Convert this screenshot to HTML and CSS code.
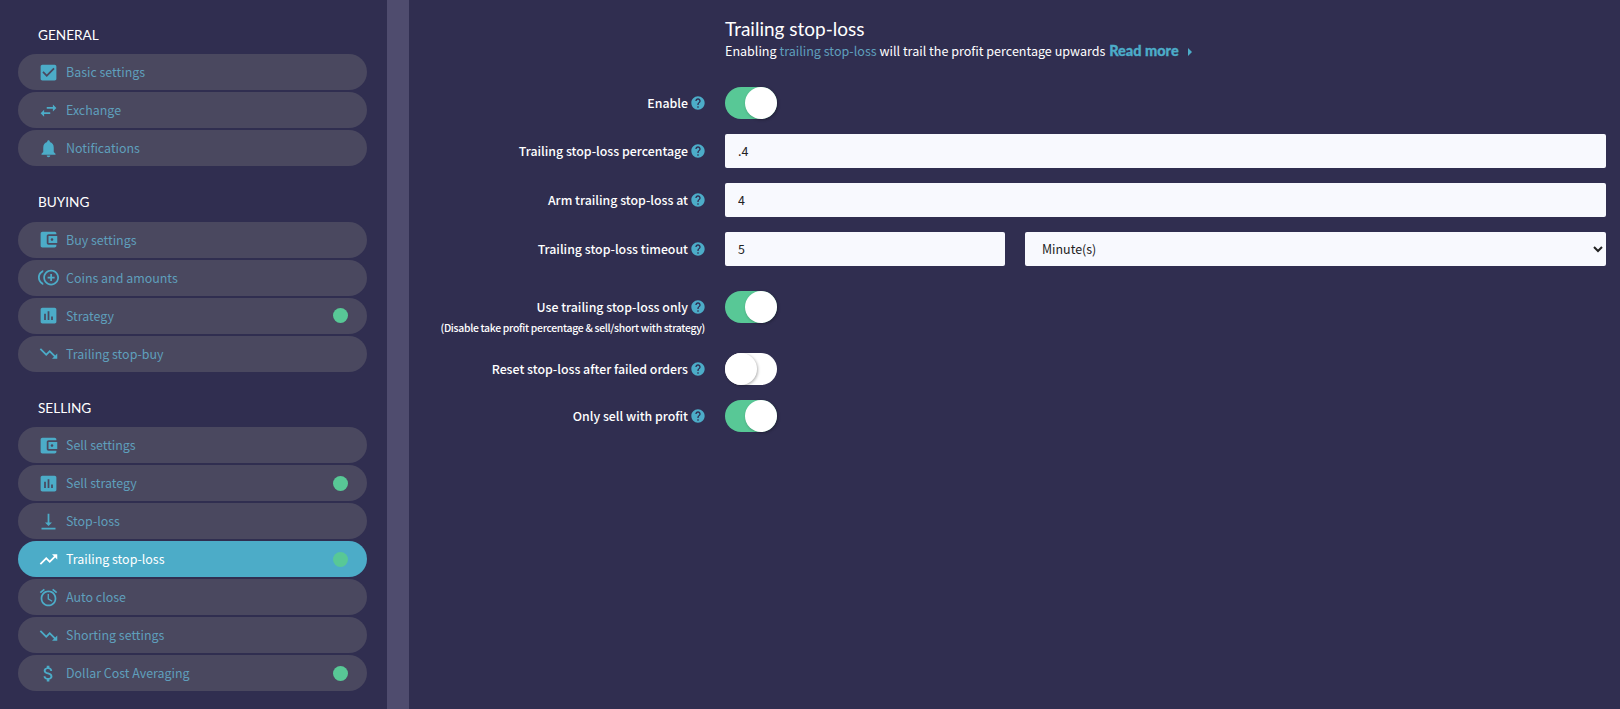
FILE: index.html
```html
<!DOCTYPE html>
<html lang="en">
  <head>
    <meta charset="UTF-8" />
    <meta name="viewport" content="width=device-width, initial-scale=1.0" />
    <title>Trailing stop-loss</title>
    <link rel="stylesheet" href="styles.css">
  </head>
  <body>
    <aside class="sidebar">
      <section class="menu-group">
        <h4 class="menu-title">GENERAL</h4>
        <a class="menu-item" href="#">
          <svg class="menu-icon" viewBox="0 0 24 24"><path d="M19 3H5c-1.11 0-2 .9-2 2v14c0 1.1.89 2 2 2h14c1.11 0 2-.9 2-2V5c0-1.1-.89-2-2-2zm-9 14l-5-5 1.41-1.41L10 14.17l7.59-7.59L19 8l-9 9z"/></svg>
          <span>Basic settings</span>
        </a>
        <a class="menu-item" href="#">
          <svg class="menu-icon" viewBox="0 0 24 24"><path d="M6.99 11L3 15l3.99 4v-3H14v-2H6.99v-3zM21 9l-3.99-4v3H10v2h7.01v3L21 9z"/></svg>
          <span>Exchange</span>
        </a>
        <a class="menu-item" href="#">
          <svg class="menu-icon" viewBox="0 0 24 24"><path d="M12 22c1.1 0 2-.9 2-2h-4c0 1.1.89 2 2 2zm6-6v-5c0-3.07-1.64-5.64-4.5-6.32V4c0-.83-.67-1.5-1.5-1.5s-1.5.67-1.5 1.5v.68C7.63 5.36 6 7.92 6 11v5l-2 2v1h16v-1l-2-2z"/></svg>
          <span>Notifications</span>
        </a>
      </section>
      <section class="menu-group">
        <h4 class="menu-title">BUYING</h4>
        <a class="menu-item" href="#">
          <svg class="menu-icon" viewBox="0 0 24 24"><path d="M21 18v1c0 1.1-.9 2-2 2H5c-1.11 0-2-.9-2-2V5c0-1.1.89-2 2-2h14c1.1 0 2 .9 2 2v1h-9c-1.11 0-2 .9-2 2v8c0 1.1.89 2 2 2h9zm-9-2h10V8H12v8zm4-2.5c-.83 0-1.5-.67-1.5-1.5s.67-1.5 1.5-1.5 1.5.67 1.5 1.5-.67 1.5-1.5 1.5z"/></svg>
          <span>Buy settings</span>
        </a>
        <a class="menu-item" href="#">
          <svg class="menu-icon" viewBox="0 0 24 24"><path d="M16 8h-2v3h-3v2h3v3h2v-3h3v-2h-3zM2 12c0-2.79 1.64-5.2 4.01-6.32V3.52C2.52 4.76 0 8.09 0 12s2.52 7.24 6.01 8.48v-2.16C3.64 17.2 2 14.79 2 12zm13-9c-4.96 0-9 4.04-9 9s4.04 9 9 9 9-4.04 9-9-4.04-9-9-9zm0 16c-3.86 0-7-3.14-7-7s3.14-7 7-7 7 3.14 7 7-3.14 7-7 7z"/></svg>
          <span>Coins and amounts</span>
        </a>
        <a class="menu-item" href="#">
          <svg class="menu-icon" viewBox="0 0 24 24"><path d="M19 3H5c-1.1 0-2 .9-2 2v14c0 1.1.9 2 2 2h14c1.1 0 2-.9 2-2V5c0-1.1-.9-2-2-2zM9 17H7v-7h2v7zm4 0h-2V7h2v10zm4 0h-2v-4h2v4z"/></svg>
          <span>Strategy</span>
          <i class="dot"></i>
        </a>
        <a class="menu-item" href="#">
          <svg class="menu-icon" viewBox="0 0 24 24"><path d="M16 18l2.29-2.29-4.88-4.88-4 4L2 7.41 3.41 6l6 6 4-4 6.3 6.29L22 12v6z"/></svg>
          <span>Trailing stop-buy</span>
        </a>
      </section>
      <section class="menu-group">
        <h4 class="menu-title">SELLING</h4>
        <a class="menu-item" href="#">
          <svg class="menu-icon" viewBox="0 0 24 24"><path d="M21 18v1c0 1.1-.9 2-2 2H5c-1.11 0-2-.9-2-2V5c0-1.1.89-2 2-2h14c1.1 0 2 .9 2 2v1h-9c-1.11 0-2 .9-2 2v8c0 1.1.89 2 2 2h9zm-9-2h10V8H12v8zm4-2.5c-.83 0-1.5-.67-1.5-1.5s.67-1.5 1.5-1.5 1.5.67 1.5 1.5-.67 1.5-1.5 1.5z"/></svg>
          <span>Sell settings</span>
        </a>
        <a class="menu-item" href="#">
          <svg class="menu-icon" viewBox="0 0 24 24"><path d="M19 3H5c-1.1 0-2 .9-2 2v14c0 1.1.9 2 2 2h14c1.1 0 2-.9 2-2V5c0-1.1-.9-2-2-2zM9 17H7v-7h2v7zm4 0h-2V7h2v10zm4 0h-2v-4h2v4z"/></svg>
          <span>Sell strategy</span>
          <i class="dot"></i>
        </a>
        <a class="menu-item" href="#">
          <svg class="menu-icon" viewBox="0 0 24 24"><path d="M16 13h-3V3h-2v10H8l4 4 4-4zM4 19v2h16v-2H4z"/></svg>
          <span>Stop-loss</span>
        </a>
        <a class="menu-item active" href="#">
          <svg class="menu-icon" viewBox="0 0 24 24"><path d="M16 6l2.29 2.29-4.88 4.88-4-4L2 16.59 3.41 18l6-6 4 4 6.3-6.29L22 12V6z"/></svg>
          <span>Trailing stop-loss</span>
          <i class="dot"></i>
        </a>
        <a class="menu-item" href="#">
          <svg class="menu-icon" viewBox="0 0 24 24"><path d="M22 5.72l-4.6-3.86-1.29 1.53 4.6 3.86L22 5.72zM7.88 3.39L6.6 1.86 2 5.71l1.29 1.53 4.59-3.85zM12.5 8H11v6l4.75 2.85.75-1.23-4-2.37V8zM12 4c-4.97 0-9 4.03-9 9s4.03 9 9 9 9-4.03 9-9-4.03-9-9-9zm0 16c-3.87 0-7-3.13-7-7s3.13-7 7-7 7 3.13 7 7-3.13 7-7 7z"/></svg>
          <span>Auto close</span>
        </a>
        <a class="menu-item" href="#">
          <svg class="menu-icon" viewBox="0 0 24 24"><path d="M16 18l2.29-2.29-4.88-4.88-4 4L2 7.41 3.41 6l6 6 4-4 6.3 6.29L22 12v6z"/></svg>
          <span>Shorting settings</span>
        </a>
        <a class="menu-item" href="#">
          <svg class="menu-icon" viewBox="0 0 24 24"><path d="M11.8 10.9c-2.27-.59-3-1.2-3-2.15 0-1.09 1.01-1.85 2.7-1.85 1.78 0 2.44.85 2.5 2.1h2.21c-.07-1.72-1.12-3.3-3.21-3.81V3h-3v2.16c-1.94.42-3.5 1.68-3.5 3.61 0 2.31 1.91 3.46 4.7 4.13 2.5.6 3 1.48 3 2.41 0 .69-.49 1.79-2.7 1.79-2.06 0-2.87-.92-2.98-2.1h-2.2c.12 2.19 1.76 3.42 3.68 3.83V21h3v-2.15c1.95-.37 3.5-1.5 3.5-3.55 0-2.84-2.43-3.81-4.7-4.4z"/></svg>
          <span>Dollar Cost Averaging</span>
          <i class="dot"></i>
        </a>
      </section>
    </aside>
    <div class="scroll-track"></div>

    <main class="content">
      <div class="intro">
        <h3 class="intro-title">Trailing stop-loss</h3>
        <p class="intro-text">
          Enabling <a href="#" class="intro-link">trailing stop-loss</a> will trail the profit percentage upwards
          <a href="#" class="read-more">Read more</a>
          <svg class="read-arrow" viewBox="0 0 4 8"><path d="M0 0l4 4-4 4z"/></svg>
        </p>
      </div>

      <div class="form-row">
        <label class="form-label">Enable
          <svg class="help" viewBox="0 0 24 24"><path d="M12 2C6.48 2 2 6.48 2 12s4.48 10 10 10 10-4.48 10-10S17.52 2 12 2zm1 17h-2v-2h2v2zm2.07-7.75l-.9.92C13.45 12.9 13 13.5 13 15h-2v-.5c0-1.1.45-2.1 1.17-2.83l1.24-1.26c.37-.36.59-.86.59-1.41 0-1.1-.9-2-2-2s-2 .9-2 2H8c0-2.21 1.79-4 4-4s4 1.79 4 4c0 .88-.36 1.68-.93 2.25z"/></svg>
        </label>
        <div class="toggle on"></div>
      </div>

      <div class="form-row">
        <label class="form-label">Trailing stop-loss percentage
          <svg class="help" viewBox="0 0 24 24"><path d="M12 2C6.48 2 2 6.48 2 12s4.48 10 10 10 10-4.48 10-10S17.52 2 12 2zm1 17h-2v-2h2v2zm2.07-7.75l-.9.92C13.45 12.9 13 13.5 13 15h-2v-.5c0-1.1.45-2.1 1.17-2.83l1.24-1.26c.37-.36.59-.86.59-1.41 0-1.1-.9-2-2-2s-2 .9-2 2H8c0-2.21 1.79-4 4-4s4 1.79 4 4c0 .88-.36 1.68-.93 2.25z"/></svg>
        </label>
        <input class="field" type="text" value=".4" />
      </div>

      <div class="form-row">
        <label class="form-label">Arm trailing stop-loss at
          <svg class="help" viewBox="0 0 24 24"><path d="M12 2C6.48 2 2 6.48 2 12s4.48 10 10 10 10-4.48 10-10S17.52 2 12 2zm1 17h-2v-2h2v2zm2.07-7.75l-.9.92C13.45 12.9 13 13.5 13 15h-2v-.5c0-1.1.45-2.1 1.17-2.83l1.24-1.26c.37-.36.59-.86.59-1.41 0-1.1-.9-2-2-2s-2 .9-2 2H8c0-2.21 1.79-4 4-4s4 1.79 4 4c0 .88-.36 1.68-.93 2.25z"/></svg>
        </label>
        <input class="field" type="text" value="4" />
      </div>

      <div class="form-row form-row-wide">
        <label class="form-label">Trailing stop-loss timeout
          <svg class="help" viewBox="0 0 24 24"><path d="M12 2C6.48 2 2 6.48 2 12s4.48 10 10 10 10-4.48 10-10S17.52 2 12 2zm1 17h-2v-2h2v2zm2.07-7.75l-.9.92C13.45 12.9 13 13.5 13 15h-2v-.5c0-1.1.45-2.1 1.17-2.83l1.24-1.26c.37-.36.59-.86.59-1.41 0-1.1-.9-2-2-2s-2 .9-2 2H8c0-2.21 1.79-4 4-4s4 1.79 4 4c0 .88-.36 1.68-.93 2.25z"/></svg>
        </label>
        <div class="field-pair">
          <input class="field" type="text" value="5" />
          <select class="field field-select">
            <option>Minute(s)</option>
            <option>Hour(s)</option>
          </select>
        </div>
      </div>

      <div class="form-row form-row-top">
        <div class="form-label-stack">
          <label class="form-label">Use trailing stop-loss only
            <svg class="help" viewBox="0 0 24 24"><path d="M12 2C6.48 2 2 6.48 2 12s4.48 10 10 10 10-4.48 10-10S17.52 2 12 2zm1 17h-2v-2h2v2zm2.07-7.75l-.9.92C13.45 12.9 13 13.5 13 15h-2v-.5c0-1.1.45-2.1 1.17-2.83l1.24-1.26c.37-.36.59-.86.59-1.41 0-1.1-.9-2-2-2s-2 .9-2 2H8c0-2.21 1.79-4 4-4s4 1.79 4 4c0 .88-.36 1.68-.93 2.25z"/></svg>
          </label>
          <small class="form-note">(Disable take profit percentage &amp; sell/short with strategy)</small>
        </div>
        <div class="toggle on"></div>
      </div>

      <div class="form-row">
        <label class="form-label">Reset stop-loss after failed orders
          <svg class="help" viewBox="0 0 24 24"><path d="M12 2C6.48 2 2 6.48 2 12s4.48 10 10 10 10-4.48 10-10S17.52 2 12 2zm1 17h-2v-2h2v2zm2.07-7.75l-.9.92C13.45 12.9 13 13.5 13 15h-2v-.5c0-1.1.45-2.1 1.17-2.83l1.24-1.26c.37-.36.59-.86.59-1.41 0-1.1-.9-2-2-2s-2 .9-2 2H8c0-2.21 1.79-4 4-4s4 1.79 4 4c0 .88-.36 1.68-.93 2.25z"/></svg>
        </label>
        <div class="toggle"></div>
      </div>

      <div class="form-row">
        <label class="form-label">Only sell with profit
          <svg class="help" viewBox="0 0 24 24"><path d="M12 2C6.48 2 2 6.48 2 12s4.48 10 10 10 10-4.48 10-10S17.52 2 12 2zm1 17h-2v-2h2v2zm2.07-7.75l-.9.92C13.45 12.9 13 13.5 13 15h-2v-.5c0-1.1.45-2.1 1.17-2.83l1.24-1.26c.37-.36.59-.86.59-1.41 0-1.1-.9-2-2-2s-2 .9-2 2H8c0-2.21 1.79-4 4-4s4 1.79 4 4c0 .88-.36 1.68-.93 2.25z"/></svg>
        </label>
        <div class="toggle on"></div>
      </div>
    </main>
  </body>
</html>
```

FILE: styles.css
```css
body {
  margin: 0;
  height: 100vh;
  overflow: hidden;
  display: flex;
  font-family: "Noto Sans CJK SC", "Noto Sans", sans-serif;
  font-size: 12.45px;
  color: #fff;
  background-color: #302e50;
}
a {
  text-decoration: none;
}

/* sidebar */
.sidebar {
  width: 387px;
  flex-shrink: 0;
  padding: 23.5px 0 0 18px;
  box-sizing: border-box;
}
.menu-group {
  width: 349px;
  display: flex;
  flex-direction: column;
  gap: 2px;
  margin-bottom: 25px;
}
.menu-title {
  margin: 0 0 6.5px 20px;
  font-family: "Lato", sans-serif;
  font-size: 13.6px;
  line-height: 22px;
  font-weight: 400;
}
.menu-item {
  height: 36px;
  display: flex;
  align-items: center;
  padding: 0 19px 0 20px;
  box-sizing: border-box;
  border-radius: 18px;
  background-color: #4a485f;
  color: #5f9fbc;
}
.menu-icon {
  width: 21px;
  height: 21px;
  margin-right: 7px;
  fill: #4cacc8;
}
.dot {
  width: 15px;
  height: 15px;
  margin-left: auto;
  border-radius: 50%;
  background-color: #58c896;
}
.menu-item.active {
  background-color: #4cacc8;
  color: #fff;
}
.menu-item.active .menu-icon {
  fill: #fff;
}
.scroll-track {
  width: 22px;
  flex-shrink: 0;
  background-color: #4f4c6e;
}

/* main form */
.content {
  flex: 1;
  padding: 18px 14px 0 0;
}
.intro {
  margin-left: 316px;
  height: 69px;
}
.intro-title {
  margin: 0;
  font-family: "Lato", sans-serif;
  font-size: 19px;
  line-height: 22px;
  font-weight: 400;
}
.intro-text {
  margin: 0;
  font-size: 12.55px;
  line-height: 22px;
}
.intro-link {
  color: #5f9fbc;
}
.read-more {
  margin-left: 1px;
  font-family: "Lato", sans-serif;
  font-size: 14.5px;
  font-weight: 900;
  -webkit-text-stroke: 0.3px #4cacc8;
  color: #4cacc8;
}
.read-arrow {
  width: 4px;
  height: 8px;
  margin-left: 7px;
  fill: #4cacc8;
}
.form-row {
  display: grid;
  grid-template-columns: 296px 1fr;
  column-gap: 20px;
  align-items: center;
  margin-bottom: 15px;
}
.form-row-wide {
  margin-bottom: 25px;
}
.form-row-top {
  align-items: start;
}
.form-label {
  display: flex;
  justify-content: flex-end;
  align-items: center;
  gap: 2px;
  font-size: 12.35px;
  font-weight: 500;
  line-height: 20px;
}
.form-label-stack {
  min-height: 47px;
  padding-top: 6px;
  box-sizing: border-box;
}
.form-note {
  display: block;
  margin-top: 3px;
  text-align: right;
  white-space: nowrap;
  font-size: 10.4px;
  font-weight: 500;
  letter-spacing: -0.3px;
  line-height: 16px;
}
.help {
  width: 16px;
  height: 16px;
  margin-right: -1px;
  fill: #4cacc8;
}
.field {
  width: 100%;
  height: 34px;
  padding: 0 13px;
  box-sizing: border-box;
  border: none;
  border-radius: 2px;
  background-color: #f8f9fe;
  color: #222;
  font-family: inherit;
  font-size: 12.45px;
}
.field-pair {
  display: grid;
  grid-template-columns: 280px 1fr;
  column-gap: 20px;
}

/* toggles */
.toggle {
  position: relative;
  width: 52px;
  height: 32px;
  box-sizing: border-box;
  border-radius: 16px;
  background-color: #fff;
}
.toggle::after {
  content: "";
  position: absolute;
  top: 0;
  left: 0;
  width: 32px;
  height: 32px;
  border-radius: 50%;
  background-color: #fff;
  box-shadow: 1px 1px 3px rgba(0, 0, 0, 0.3);
}
.toggle.on {
  background-color: #58c896;
}
.toggle.on::after {
  left: 20px;
}
```
